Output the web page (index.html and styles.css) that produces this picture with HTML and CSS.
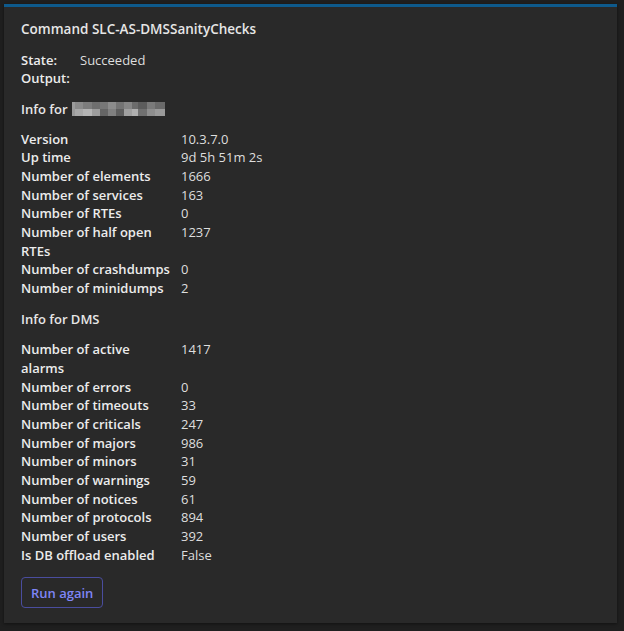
FILE: index.html
```html
<!DOCTYPE html>
<html>
<head>
<meta charset="utf-8">
<link rel="stylesheet" href="styles.css">
</head>
<body>
<div class="panel">
  <h1 class="title">Command SLC-AS-DMSSanityChecks</h1>
  <div class="state">
    <span class="label">State:</span><span class="value">Succeeded</span>
    <span class="label">Output:</span><span class="value"></span>
  </div>
  <h2 class="section">Info for <svg class="mosaic" width="93" height="14" viewBox="0 0 93 14">
    <rect x="0" y="0" width="93" height="14" fill="#6a6a6a"/>
    <rect x="0" y="0" width="3" height="14" fill="#9a9a9a"/>
    <rect x="3" y="0" width="8" height="7" fill="#8a8a8a"/>
    <rect x="3" y="7" width="8" height="7" fill="#a8a8a8"/>
    <rect x="11" y="0" width="9" height="7" fill="#7c7c7c"/>
    <rect x="11" y="7" width="9" height="7" fill="#b4b4b4"/>
    <rect x="20" y="0" width="8" height="7" fill="#6e6e6e"/>
    <rect x="20" y="7" width="8" height="7" fill="#9c9c9c"/>
    <rect x="28" y="0" width="8" height="7" fill="#777"/>
    <rect x="28" y="7" width="8" height="7" fill="#656565"/>
    <rect x="36" y="0" width="8" height="7" fill="#8c8c8c"/>
    <rect x="36" y="7" width="8" height="7" fill="#808080"/>
    <rect x="44" y="0" width="8" height="7" fill="#747474"/>
    <rect x="44" y="7" width="8" height="7" fill="#5e5e5e"/>
    <rect x="52" y="0" width="8" height="7" fill="#868686"/>
    <rect x="52" y="7" width="8" height="7" fill="#a0a0a0"/>
    <rect x="60" y="0" width="6" height="7" fill="#6c6c6c"/>
    <rect x="60" y="7" width="6" height="7" fill="#b0b0b0"/>
    <rect x="66" y="0" width="9" height="7" fill="#5c5c5c"/>
    <rect x="66" y="7" width="9" height="7" fill="#707070"/>
    <rect x="75" y="0" width="8" height="7" fill="#7a7a7a"/>
    <rect x="75" y="7" width="8" height="7" fill="#8e8e8e"/>
    <rect x="83" y="0" width="10" height="7" fill="#6a6a6a"/>
    <rect x="83" y="7" width="10" height="7" fill="#9a9a9a"/>
  </svg></h2>
  <div class="kv first">
    <span class="label">Version</span><span class="value">10.3.7.0</span>
    <span class="label">Up time</span><span class="value">9d 5h 51m 2s</span>
    <span class="label">Number of elements</span><span class="value">1666</span>
    <span class="label">Number of services</span><span class="value">163</span>
    <span class="label">Number of RTEs</span><span class="value">0</span>
    <span class="label">Number of half open RTEs</span><span class="value">1237</span>
    <span class="label">Number of crashdumps</span><span class="value">0</span>
    <span class="label">Number of minidumps</span><span class="value">2</span>
  </div>
  <h2 class="section">Info for DMS</h2>
  <div class="kv">
    <span class="label">Number of active alarms</span><span class="value">1417</span>
    <span class="label">Number of errors</span><span class="value">0</span>
    <span class="label">Number of timeouts</span><span class="value">33</span>
    <span class="label">Number of criticals</span><span class="value">247</span>
    <span class="label">Number of majors</span><span class="value">986</span>
    <span class="label">Number of minors</span><span class="value">31</span>
    <span class="label">Number of warnings</span><span class="value">59</span>
    <span class="label">Number of notices</span><span class="value">61</span>
    <span class="label">Number of protocols</span><span class="value">894</span>
    <span class="label">Number of users</span><span class="value">392</span>
    <span class="label">Is DB offload enabled</span><span class="value">False</span>
  </div>
  <button class="run">Run again</button>
</div>
</body>
</html>
```

FILE: styles.css
```css
html, body {
  margin: 0;
  padding: 0;
  background: #1f1f1f;
}
body {
  padding: 4px 7px 8px 4px;
  font-family: "Open Sans", "Noto Sans", sans-serif;
  font-size: 13px;
  line-height: 18.67px;
  color: #e6e6e6;
}
.panel {
  background: #292929;
  border-top: 3px solid #0e5a8c;
  padding: 13px 16px 15px 17px;
  box-shadow: 0 1px 3px rgba(0,0,0,0.45);
  display: flex;
  flex-direction: column;
  align-items: flex-start;
  gap: 12px;
}
.title {
  margin: 0;
  font-size: 13.5px;
  font-weight: 600;
  line-height: 18.67px;
}
.section {
  margin: 0;
  font-size: 13px;
  font-weight: 600;
  line-height: 18.67px;
  display: flex;
  align-items: center;
  gap: 4px;
}
.mosaic {
  display: block;
  margin-top: -1px;
}
.state {
  display: grid;
  grid-template-columns: 59px auto;
}
.kv {
  display: grid;
  grid-template-columns: 150px auto;
  column-gap: 10px;
}
.kv.first {
  margin-top: -1px;
}
.label {
  font-weight: 600;
  color: #ececec;
}
.value {
  color: #dedede;
}
.run {
  margin-top: 1px;
  background: transparent;
  border: 1px solid #4a4d9e;
  border-radius: 4px;
  color: #7f85f5;
  font-family: inherit;
  font-size: 13px;
  font-weight: 600;
  height: 31px;
  padding: 0 9px;
}
```
